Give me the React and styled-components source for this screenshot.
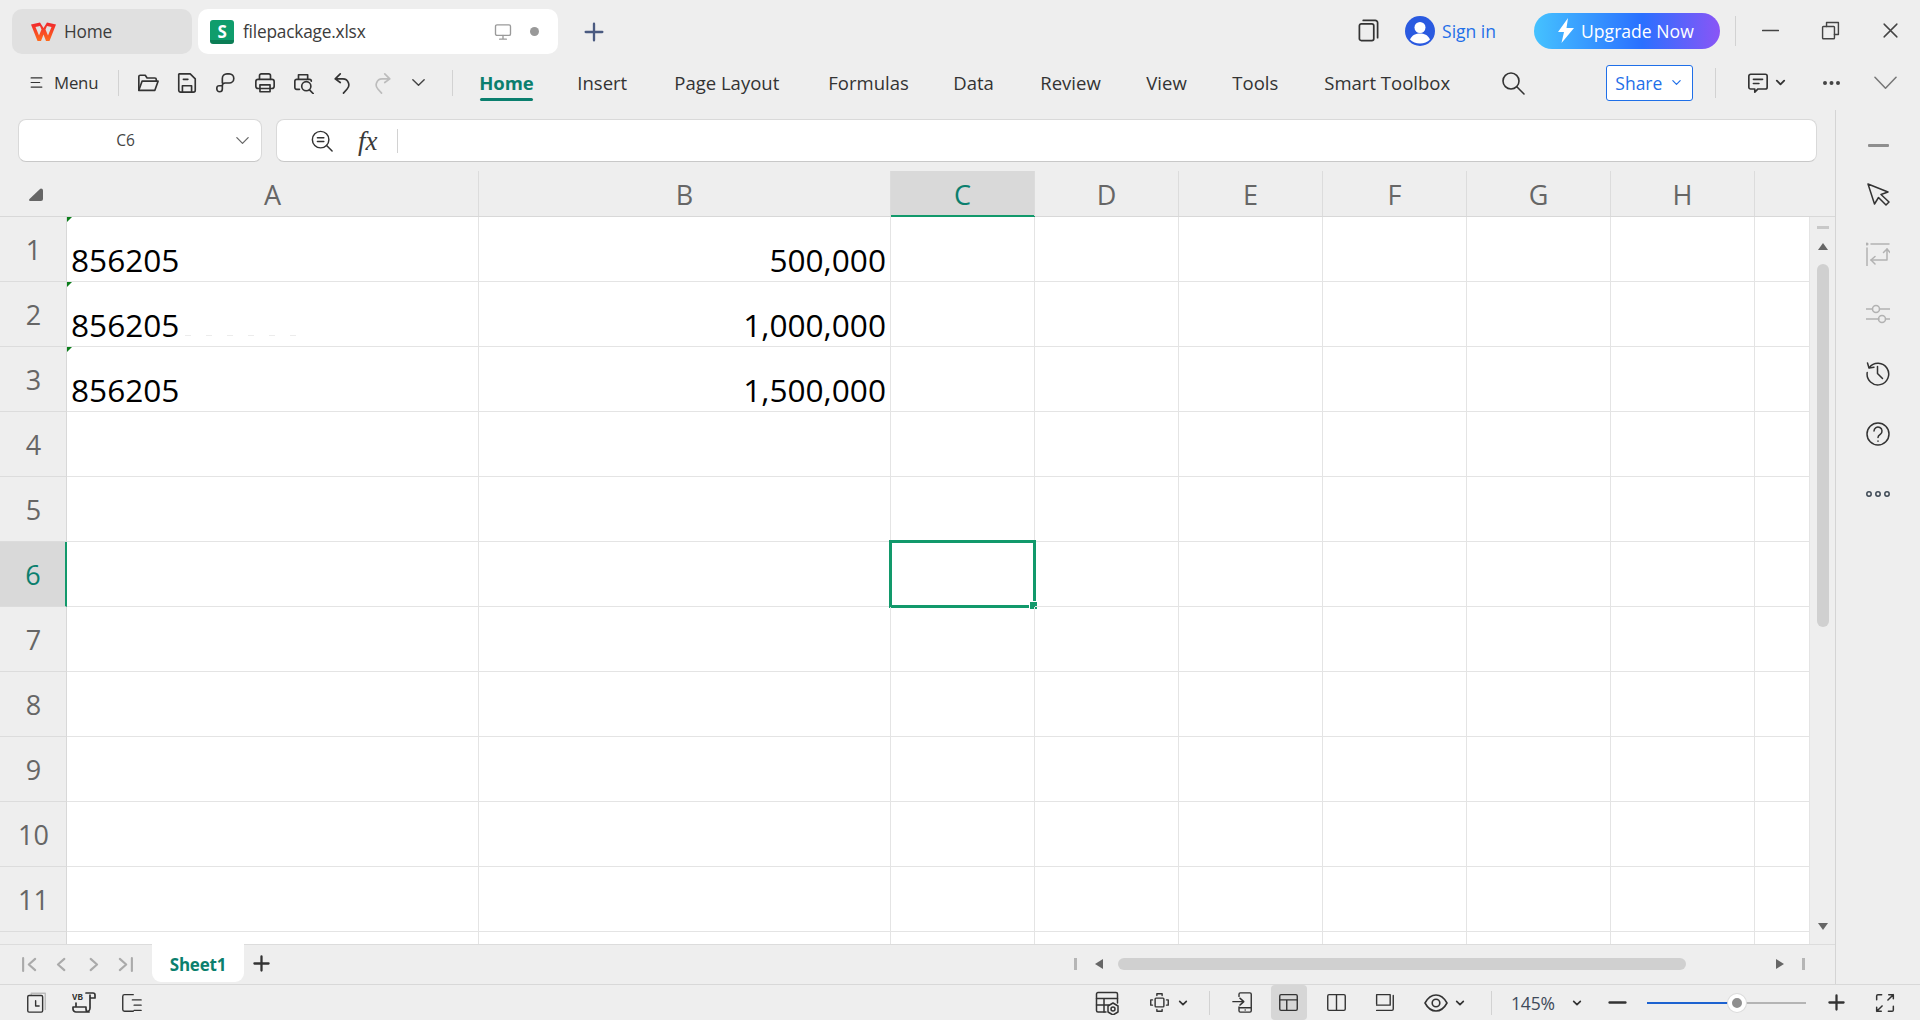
import React from "react";
import styled, { createGlobalStyle } from "styled-components";

const GlobalStyle = createGlobalStyle`
  html, body { margin: 0; padding: 0; height: 100%; background: #eeeeee; overflow: hidden; }
  * { box-sizing: border-box; }
  #root { height: 100%; }
`;

const TEAL = "#0b7f6e";
const GREEN = "#12996b";
const BLUE = "#1f6fe8";
const COLS = "67px 412px 412px 144px 144px 144px 144px 144px 144px 1fr";

const Page = styled.div`
  width: 1920px;
  height: 1020px;
  display: flex;
  flex-direction: column;
  background: #eeeeee;
  font-family: "Open Sans", "Noto Sans", sans-serif;
  color: #333;
`;

/* title bar */
const TitleBar = styled.div`
  height: 58px;
  flex: none;
  display: flex;
  align-items: flex-start;
  padding: 9px 0 0 12px;
`;
const Tab = styled.div`
  height: 45px;
  width: ${(p) => p.$w}px;
  margin-right: 6px;
  flex: none;
  display: flex;
  align-items: center;
  border-radius: 10px;
  padding-left: ${(p) => p.$pad}px;
  background: ${(p) => (p.$active ? "#ffffff" : "#e0e0e0")};
  font-size: 17.3px;
  letter-spacing: -0.2px;
  color: #3c3c3c;
`;
const TabName = styled.span`
  margin-left: ${(p) => p.$ml}px;
`;
const SheetBadge = styled.div`
  width: 24px;
  height: 24px;
  flex: none;
  border-radius: 3px;
  background: linear-gradient(#0f9d6c 0 82%, #0b7d55 82% 100%);
  color: #fff;
  font-weight: 700;
  font-size: 17px;
  display: flex;
  align-items: center;
  justify-content: center;
`;
const TabEnd = styled.div`
  margin-left: auto;
  display: flex;
  align-items: center;
  gap: 18px;
  padding-right: 19px;
`;
const TabDot = styled.span`
  width: 9px;
  height: 9px;
  border-radius: 50%;
  background: #999;
`;
const NewTab = styled.div`
  margin: 13px 0 0 20px;
  display: flex;
`;
const TitleRight = styled.div`
  margin-left: auto;
  display: flex;
  align-items: center;
  height: 39px;
  margin-top: 2px;
`;
const SignIn = styled.span`
  color: ${BLUE};
  font-size: 17.5px;
  margin-left: 7px;
`;
const Upgrade = styled.div`
  width: 186px;
  height: 36px;
  margin-left: 38px;
  border-radius: 18px;
  background: linear-gradient(90deg, #45c2ff 0%, #2a70ff 58%, #8a55f6 100%);
  color: #fff;
  font-size: 17.6px;
  display: flex;
  align-items: center;
  padding-left: 23px;
  gap: 6px;
`;
const VDivider = styled.div`
  width: 1px;
  height: ${(p) => p.$h || 26}px;
  margin: 0 ${(p) => p.$r ?? 0}px 0 ${(p) => p.$l ?? 0}px;
  background: #d2d2d2;
  flex: none;
`;
const WinButtons = styled.div`
  display: flex;
  align-items: center;
  width: 184px;
  padding-left: 26px;
  justify-content: flex-start;
  gap: 42px;
`;

/* ribbon */
const Ribbon = styled.div`
  height: 52px;
  flex: none;
  display: flex;
  align-items: center;
  padding: 0 0 3px 30px;
`;
const MenuText = styled.span`
  font-size: 16.8px;
  letter-spacing: -0.2px;
  margin-left: 11px;
`;
const QuickBar = styled.div`
  display: flex;
  align-items: center;
  gap: 17px;
`;
const RibbonTabs = styled.div`
  display: flex;
  align-items: center;
  margin-left: 26px;
`;
const RibbonTab = styled.div`
  position: relative;
  font-size: 18.5px;
  width: ${(p) => p.$w}px;
  font-weight: ${(p) => (p.$active ? 700 : 400)};
  letter-spacing: ${(p) => (p.$active ? "-0.1px" : "0")};
  color: ${(p) => (p.$active ? TEAL : "#333")};
  white-space: nowrap;
  &::after {
    content: "";
    display: ${(p) => (p.$active ? "block" : "none")};
    position: absolute;
    left: 1px;
    top: 28px;
    width: 53px;
    height: 3px;
    border-radius: 2px;
    background: ${TEAL};
  }
`;
const ShareButton = styled.div`
  width: 87px;
  height: 36px;
  margin-left: 81px;
  border: 1px solid ${BLUE};
  border-radius: 3px;
  background: #fff;
  color: ${BLUE};
  font-size: 17.5px;
  display: flex;
  align-items: center;
  padding-left: 8px;
  gap: 9px;
`;
const RibbonEnd = styled.div`
  display: flex;
  align-items: center;
`;
const MoreDots = styled.div`
  display: flex;
  margin-left: ${(p) => p.$ml}px;
`;

/* main */
const Main = styled.div`
  flex: 1;
  display: flex;
  min-height: 0;
`;
const Workspace = styled.div`
  width: 1835px;
  flex: none;
  display: flex;
  flex-direction: column;
`;
const Rail = styled.div`
  flex: 1;
  border-left: 1px solid #d4d4d4;
  display: flex;
  flex-direction: column;
  align-items: center;
  padding-top: 34px;
  gap: 36px;
`;
const RailDash = styled.div`
  width: 21px;
  height: 3px;
  margin-bottom: -1px;
  border-radius: 1px;
  background: #8e8e8e;
`;

const FormulaRow = styled.div`
  height: 61px;
  flex: none;
  padding: 9px 18px 9px 18px;
  display: flex;
  gap: 14px;
`;
const Box = styled.div`
  height: 43px;
  background: #fff;
  border: 1px solid #d9d9d9;
  border-bottom-color: #c8c8c8;
  border-radius: 8px;
  display: flex;
  align-items: center;
`;
const NameBox = styled(Box)`
  width: 244px;
  flex: none;
  font-size: 15.5px;
  color: #444;
  padding-right: 10px;
  & > span {
    flex: 1;
    text-align: center;
    padding: 0 2px 2px 0;
  }
`;
const FormulaBox = styled(Box)`
  flex: 1;
  padding-left: 34px;
`;
const Fx = styled.span`
  font-family: "Liberation Serif", serif;
  font-style: italic;
  font-size: 27px;
  line-height: 30px;
  color: #3a3a3a;
  margin: 0 17px 0 25px;
  width: 22px;
`;

/* sheet */
const ColumnHeader = styled.div`
  height: 46px;
  flex: none;
  display: grid;
  grid-template-columns: ${COLS};
  border-bottom: 1px solid #d8d8d8;
`;
const Corner = styled.div`
  display: flex;
  align-items: center;
  justify-content: center;
  padding: 0 0 0 4px;
  margin-top: 2px;
`;
const ColLabel = styled.div`
  position: relative;
  display: flex;
  align-items: center;
  justify-content: center;
  padding-top: 2px;
  font-size: 27px;
  color: ${(p) => (p.$on ? TEAL : "#666")};
  background: ${(p) => (p.$on ? "#d9d9d9" : "transparent")};
  border-right: ${(p) => (p.$last ? "none" : "1px solid #dcdcdc")};
  box-shadow: ${(p) => (p.$on ? `inset 0 -1px 0 ${GREEN}, 0 1px 0 ${GREEN}` : "none")};
`;
const SheetBody = styled.div`
  flex: 1;
  display: flex;
  min-height: 0;
`;
const Grid = styled.div`
  width: 1810px;
  flex: none;
  overflow: hidden;
  background: #fff;
`;
const Row = styled.div`
  height: ${(p) => p.$h}px;
  display: grid;
  grid-template-columns: ${COLS};
`;
const RowLabel = styled.div`
  display: flex;
  align-items: center;
  justify-content: center;
  padding-left: 1px;
  font-size: 27px;
  background: ${(p) => (p.$on ? "#d9d9d9" : "#eeeeee")};
  color: ${(p) => (p.$on ? TEAL : "#666")};
  border-bottom: 1px solid #dcdcdc;
  border-right: ${(p) => (p.$on ? `2px solid ${GREEN}` : "1px solid #d8d8d8")};
`;
const Cell = styled.div`
  position: relative;
  display: flex;
  align-items: flex-end;
  justify-content: ${(p) => (p.$right ? "flex-end" : "flex-start")};
  padding: 0 4px 1px 4px;
  font-size: 31.6px;
  line-height: 41px;
  color: #000;
  border-right: 1px solid #e4e4e4;
  border-bottom: 1px solid #e4e4e4;
`;
const ErrorMark = styled.span`
  position: absolute;
  left: 0;
  top: 0;
  width: 0;
  height: 0;
  border-top: 5px solid #0a7d1a;
  border-right: 5px solid transparent;
`;
const Selection = styled.div`
  position: absolute;
  inset: -2px;
  border: 3px solid ${GREEN};
  &::after {
    content: "";
    position: absolute;
    right: -4px;
    bottom: -4px;
    width: 7px;
    height: 7px;
    background: ${GREEN};
    border: 1px solid #fff;
    border-right: none;
    border-bottom: none;
  }
`;
const FaintMark = styled.span`
  position: absolute;
  left: 118px;
  bottom: 10px;
  width: 116px;
  height: 1px;
  background: repeating-linear-gradient(90deg, #ececec 0 6px, transparent 6px 21px);
`;
const VScroll = styled.div`
  flex: 1;
  display: flex;
  flex-direction: column;
  align-items: center;
  padding: 9px 0 15px;
`;
const ScrollDash = styled.div`
  width: 12px;
  height: 3px;
  background: #c8c8c8;
`;
const Arrow = styled.div`
  width: 0;
  height: 0;
  border-left: 5px solid transparent;
  border-right: 5px solid transparent;
  ${(p) => (p.$down ? "border-top" : "border-bottom")}: 7px solid #666;
  margin-top: ${(p) => p.$mt};
`;
const VThumb = styled.div`
  width: 12px;
  height: 363px;
  margin-top: 14px;
  border-radius: 6px;
  background: #d0d0d0;
`;

const SheetBar = styled.div`
  height: 40px;
  flex: none;
  display: flex;
  align-items: flex-start;
  border-top: 1px solid #dcdcdc;
  margin-top: -1px;
  padding-left: 21px;
  position: relative;
`;
const NavGroup = styled.div`
  display: flex;
  align-items: center;
  height: 38px;
  gap: 15px;
  width: 131px;
  flex: none;
`;
const SheetTab = styled.div`
  width: 92px;
  height: 38px;
  margin-top: -1px;
  padding-top: 2px;
  background: #fff;
  border-radius: 0 0 9px 9px;
  color: ${TEAL};
  font-size: 17px;
  font-weight: 700;
  letter-spacing: -0.2px;
  display: flex;
  align-items: center;
  justify-content: center;
  flex: none;
`;
const AddSheet = styled.div`
  margin: 10px 0 0 9px;
  display: flex;
`;
const HScroll = styled.div`
  margin-left: auto;
  display: flex;
  align-items: center;
  height: 38px;
  padding-right: 30px;
`;
const Tick = styled.div`
  width: 3px;
  height: 12px;
  background: #b5b5b5;
`;
const SideArrow = styled.div`
  width: 0;
  height: 0;
  border-top: 5px solid transparent;
  border-bottom: 5px solid transparent;
  ${(p) => (p.$right ? "border-left" : "border-right")}: 8px solid #666;
  margin: 0 ${(p) => p.$r}px 0 ${(p) => p.$l}px;
`;
const HThumb = styled.div`
  width: 568px;
  height: 12px;
  border-radius: 6px;
  background: #d0d0d0;
`;

/* status bar */
const StatusBar = styled.div`
  height: 36px;
  flex: none;
  border-top: 1px solid #d8d8d8;
  display: flex;
  align-items: center;
  padding-left: 26px;
`;
const StatusLeft = styled.div`
  display: flex;
  align-items: center;
  gap: 25px;
`;
const StatusRight = styled.div`
  margin-left: auto;
  display: flex;
  align-items: center;
  padding-right: 25px;
`;
const ViewButton = styled.div`
  width: 36px;
  height: 35px;
  display: flex;
  align-items: center;
  justify-content: center;
  border-radius: 4px;
  margin-left: ${(p) => p.$ml || 0}px;
  background: ${(p) => (p.$on ? "#d6d6d6" : "transparent")};
`;
const ZoomValue = styled.span`
  font-size: 17.5px;
  letter-spacing: -0.1px;
  color: #3f4a5a;
  margin: 0 17px 0 19px;
`;
const Slider = styled.div`
  position: relative;
  width: 159px;
  height: 2px;
  margin: 0 22px 0 20px;
  background: #b4b4b4;
`;
const SliderFill = styled.div`
  height: 100%;
  background: #1c62d0;
`;
const Knob = styled.div`
  position: absolute;
  top: -8px;
  width: 18px;
  height: 18px;
  transform: translateX(-9px);
  border-radius: 50%;
  background: #8f8f8f;
  border: 4px solid #fff;
  box-shadow: 0 0 0 1px #dcdcdc;
`;

const Svg = styled.svg`
  width: ${(p) => p.$w}px;
  height: ${(p) => p.$h}px;
  margin-left: ${(p) => p.$ml || 0}px;
  flex: none;
  fill: none;
  color: ${(p) => p.$c};
  stroke: currentColor;
  stroke-width: ${(p) => p.$sw};
  stroke-linecap: round;
  stroke-linejoin: round;
`;
const Ic = ({ w = 24, h, c = "#333", sw = 1.8, ml, vb = "0 0 24 24", children }) => (
  <Svg $w={w} $h={h || w} $c={c} $sw={sw} $ml={ml} viewBox={vb}>
    {children}
  </Svg>
);

const Solid = (p) => <path fill="currentColor" stroke="none" {...p} />;
const Chevron = ({ w = 14, c = "#444", sw = 2.4, ml }) => (
  <Ic w={w} c={c} sw={sw} ml={ml}>
    <path d="M4 8l8 8 8-8" />
  </Ic>
);

const WpsLogo = () => (
  <Svg $w={25} $h={19} $c="#f03a2e" $sw={0} viewBox="0 0 25 19">
    <defs>
      <linearGradient id="wps" x1="0" y1="0" x2="0" y2="1">
        <stop offset="0" stopColor="#f0262e" />
        <stop offset="1" stopColor="#ff6a1c" />
      </linearGradient>
    </defs>
    <path
      fill="url(#wps)"
      stroke="none"
      d="M0 2.500 9 .5 12.500 6 16 .5 25 2.500 18.500 19h-3.500l-2.500-6.500L10 19H6.500zM4.500 5l3.500 8.500 2.500-6-1.500-3.500zM20.500 5 16 4l-1.500 3.500 2.500 6z"
    />
  </Svg>
);

const icons = {
  menu: <path d="M2 3.500h20M2 12h16M2 20.500h20" />,
  folder: (
    <>
      <path d="M2 20V5a1.500 1.500 0 0 1 1.500-1.500H9l2 3h8.500A1.500 1.500 0 0 1 21 8v2" />
      <path d="M2 20l3.500-10H23l-3.500 10z" />
    </>
  ),
  save: (
    <>
      <path d="M3.500 2h12l5.500 5.500V20a2 2 0 0 1-2 2H5a2 2 0 0 1-2-2V2.500z" />
      <path d="M8 8h5M7 22v-7h10v7" />
    </>
  ),
  painter: (
    <path d="M8 12V7a5 5 0 0 1 5-5h2.500a5 5 0 0 1 0 10H11a3 3 0 0 0-3 3v3.500a3 3 0 0 1-6 0v-1a2.500 2.500 0 0 1 2.500-2.500H7" />
  ),
  print: (
    <>
      <path d="M6 8V4a2 2 0 0 1 2-2h8a2 2 0 0 1 2 2v4" />
      <rect x="2" y="8" width="20" height="10" rx="2.500" />
      <path d="M6.500 14h11v7.500h-11z" />
    </>
  ),
  preview: (
    <>
      <path d="M6 8V3h10v5M7 19H4a2 2 0 0 1-2-2v-7a2 2 0 0 1 2-2h14a2 2 0 0 1 2 2" />
      <circle cx="14.500" cy="15.500" r="5" />
      <path d="M18 19.500l4 4" />
    </>
  ),
  undo: <path d="M9 2 3.500 7.500 9 11.500M3.500 7.500H12a6.500 6.500 0 0 1 4.500 11L12.500 23" />,
  redo: <path d="M15 2l5.500 5.500L15 11.500M20.500 7.500H12a6.500 6.500 0 0 0-4.500 11l4 4.500" />,
  search: (
    <>
      <circle cx="10" cy="10" r="8" />
      <path d="M15.800 15.800 23 23" />
    </>
  ),
  comment: (
    <>
      <path d="M4 2.500h16a2 2 0 0 1 2 2v12a2 2 0 0 1-2 2h-8l-3.500 3.500V18.500H4a2 2 0 0 1-2-2v-12a2 2 0 0 1 2-2z" />
      <path d="M7 8h10M7 12.500h6" />
    </>
  ),
  monitor: (
    <>
      <rect x="2" y="2.500" width="20" height="14" rx="2" />
      <path d="M12 16.500V21M7.500 21.500h9" />
    </>
  ),
  stack: (
    <>
      <rect x="2.500" y="5" width="15" height="17.500" rx="2" />
      <path d="M6.500 1.500H19a2.500 2.500 0 0 1 2.500 2.500v15.500" />
    </>
  ),
  restore: (
    <>
      <rect x="2" y="7" width="15" height="15.500" rx="1" />
      <path d="M7 7V2h15v15h-5" />
    </>
  ),
  close: <path d="M3 3l18 18M21 3 3 21" />,
  zoomOut: (
    <>
      <circle cx="10.500" cy="10.500" r="9" />
      <path d="M7 8.500h7M7 12.500h7M17 17l6 6" />
    </>
  ),
  cursor: <path d="M2 2l20 8-7 2.500 8 7.500-3 3-7.500-7.500L8.500 22z" />,
  wrap: (
    <>
      <path d="M5 2h18M1 6v18M21 7v11H5" />
      <path d="M17.500 10.500 21 7l3 3.500M9 14.500 5 18l4 4" />
      <circle cx="1" cy="2" r=".8" />
    </>
  ),
  sliders: (
    <>
      <path d="M0 7h6.500M13.500 7H24M0 17h13M19.500 17H24" />
      <circle cx="10" cy="7" r="3.500" />
      <circle cx="16" cy="17" r="3.500" />
    </>
  ),
  history: (
    <>
      <path d="M3.300 5.500A10.800 10.800 0 1 1 1.200 10.500" />
      <path d="M1.500 1 3 6l5-.8M11.500 4.500v7l5 5" />
    </>
  ),
  help: (
    <>
      <circle cx="12" cy="12" r="11" />
      <path d="M8 9a4 4 0 1 1 6.300 3.300c-1.400 1-2.300 1.600-2.300 3.200M12 19v.3" />
    </>
  ),
  ooo: (
    <>
      <circle cx="3" cy="12" r="2.200" />
      <circle cx="12" cy="12" r="2.200" />
      <circle cx="21" cy="12" r="2.200" />
    </>
  ),
  first: <path d="M3 3v18M20 4l-9 8 9 8" />,
  prev: <path d="M16 4l-9 8 9 8" />,
  next: <path d="M8 4l9 8-9 8" />,
  last: <path d="M21 3v18M4 4l9 8-9 8" />,
  plus: <path d="M12 2v20M2 12h20" />,
  clock: (
    <>
      <path d="M6 3V1.500h16V20" stroke="#bbb" />
      <rect x="2" y="4" width="17" height="19" rx="1.500" />
      <path d="M11 10v6h4" />
    </>
  ),
  outline: <path d="M14 3H4a2 2 0 0 0-2 2v15a2 2 0 0 0 2 2h10M13 9h10M15 15h8M15 21h8" />,
  table: (
    <>
      <path d="M11 21H3a1.500 1.500 0 0 1-1.500-1.500V3A1.500 1.500 0 0 1 3 1.500h18A1.500 1.500 0 0 1 22.500 3v9" />
      <path d="M1.500 7.500h21M1.500 14h12M9 7.500V21" />
      <path d="M18 12l5 3v6l-5 3-5-3v-6z" />
      <circle cx="18" cy="18" r="2" />
    </>
  ),
  move: (
    <>
      <rect x="7" y="7" width="10" height="10" rx="1" />
      <path d="M9 4V2h6v2M9 20v2h6v-2M4 9H2v6h2M20 9h2v6h-2" />
    </>
  ),
  reading: (
    <>
      <path d="M8 5V2.500A1.500 1.500 0 0 1 9.500 1h11A1.500 1.500 0 0 1 22 2.500v19a1.500 1.500 0 0 1-1.500 1.500h-11A1.500 1.500 0 0 1 8 21.500V17M8 18h14" />
      <path d="M1 11h12M9 7l4.500 4L9 15M15 20.500h.1" />
    </>
  ),
  normal: (
    <>
      <rect x="2" y="3" width="20" height="18" rx="1.500" />
      <path d="M2 9h20M10 9v12" />
    </>
  ),
  split: (
    <>
      <rect x="2" y="3" width="20" height="18" rx="1.500" />
      <path d="M12 3v18" />
    </>
  ),
  page: (
    <>
      <path d="M3 14V3h15.500v12H3" />
      <path d="M22 4v15.500a1.500 1.500 0 0 1-1.500 1.500H3" />
    </>
  ),
  eye: (
    <>
      <path d="M1 12C4 6.500 8 4 12 4s8 2.500 11 8c-3 5.500-7 8-11 8s-8-2.500-11-8z" />
      <circle cx="12" cy="12" r="3.800" />
    </>
  ),
  full: (
    <path d="M8 2H3.500A1.500 1.500 0 0 0 2 3.500V8M16 22h4.500a1.500 1.500 0 0 0 1.500-1.500V16M22 7V2h-5.500M22 2l-6.500 6.500M2 17v5h5.500M2 22l6.500-6.500" />
  ),
};

const DotsH = ({ w = 19 }) => (
  <Ic w={w} h={6} vb="0 0 19 6" c="#444">
    <Solid d="M3 1a2 2 0 1 0 0 4 2 2 0 0 0 0-4zM9.500 1a2 2 0 1 0 0 4 2 2 0 0 0 0-4zM16 1a2 2 0 1 0 0 4 2 2 0 0 0 0-4z" />
  </Ic>
);

const VbIcon = () => (
  <Svg $w={24} $h={22} $c="#333" $sw={1.7} viewBox="0 0 24 22">
    <text x="0" y="7.500" fontFamily="Liberation Mono, monospace" fontWeight="700" fontSize="9" stroke="none" fill="currentColor">
      VB
    </text>
    <path d="M14 1h7a2 2 0 0 1 2 2v3h-4M18 3v13a4 4 0 0 1-4 4H4a3 3 0 0 1-3-3v-2h13v2a3 3 0 0 0 3 3M4 14v-3" />
  </Svg>
);

const quickIcons = ["folder", "save", "painter", "print", "preview", "undo", "redo"];
const tabs = [
  ["Insert", 97],
  ["Page Layout", 154],
  ["Formulas", 125],
  ["Data", 87],
  ["Review", 106],
  ["View", 86],
  ["Tools", 92],
  ["Smart Toolbox", 177],
];
const columns = ["A", "B", "C", "D", "E", "F", "G", "H", ""];
const values = { 1: "500,000", 2: "1,000,000", 3: "1,500,000" };
const rows = [1, 2, 3, 4, 5, 6, 7, 8, 9, 10, 11, ""];
const railIcons = [
  ["cursor", "#333"],
  ["wrap", "#b2b2b2"],
  ["sliders", "#b2b2b2"],
  ["history", "#333"],
  ["help", "#333"],
  ["ooo", "#3f4a55"],
];

export default function App() {
  return (
    <Page>
      <GlobalStyle />
      <TitleBar>
        <Tab $w={180} $pad={19}>
          <WpsLogo />
          <TabName $ml={8}>Home</TabName>
        </Tab>
        <Tab $w={360} $pad={12} $active>
          <SheetBadge>S</SheetBadge>
          <TabName $ml={9}>filepackage.xlsx</TabName>
          <TabEnd>
            <Ic w={18} c="#9a9a9a" sw={1.8}>
              {icons.monitor}
            </Ic>
            <TabDot />
          </TabEnd>
        </Tab>
        <NewTab>
          <Ic w={20} c="#4a5a80" sw={2.8}>
            {icons.plus}
          </Ic>
        </NewTab>
        <TitleRight>
          <Ic w={23}>{icons.stack}</Ic>
          <Svg $w={30} $h={30} $c="#2a5ae0" $sw={0} $ml={25} viewBox="0 0 30 30">
            <circle cx="15" cy="15" r="15" fill="#2a5ae0" />
            <circle cx="15" cy="11.500" r="5.500" fill="#fff" />
            <path d="M5 23.500c2-4.500 6-6 10-6s8 1.500 10 6c-2.500 2.500-6 4-10 4s-7.500-1.500-10-4z" fill="#fff" />
          </Svg>
          <SignIn>Sign in</SignIn>
          <Upgrade>
            <Ic w={18} h={25} c="#fff" sw={0} vb="0 0 18 25">
              <Solid d="M11 0 1 14h6l-2.500 11L17 10h-7.500z" />
            </Ic>
            Upgrade Now
          </Upgrade>
          <VDivider $h={30} $l={15} />
          <WinButtons>
            <Ic w={17} c="#444" sw={2.2}>
              <path d="M1 12h22" />
            </Ic>
            <Ic w={19} c="#444" sw={1.8}>
              {icons.restore}
            </Ic>
            <Ic w={17} c="#444" sw={2}>
              {icons.close}
            </Ic>
          </WinButtons>
        </TitleRight>
      </TitleBar>

      <Ribbon>
        <Ic w={13} h={19} sw={2}>
          {icons.menu}
        </Ic>
        <MenuText>Menu</MenuText>
        <VDivider $l={20} $r={18} />
        <QuickBar>
          {quickIcons.map((name) => (
            <Ic key={name} w={22} c={name === "redo" ? "#bcbcbc" : "#333"}>
              {icons[name]}
            </Ic>
          ))}
          <Chevron w={17} sw={2} />
        </QuickBar>
        <VDivider $l={25} />
        <RibbonTabs>
          <RibbonTab $active $w={98}>
            Home
          </RibbonTab>
          {tabs.map(([name, w]) => (
            <RibbonTab key={name} $w={w}>
              {name}
            </RibbonTab>
          ))}
        </RibbonTabs>
        <RibbonEnd>
          <Ic w={24} sw={1.6}>
            {icons.search}
          </Ic>
          <ShareButton>
            Share
            <Chevron w={11} c={BLUE} sw={2.6} />
          </ShareButton>
          <VDivider $h={30} $l={22} $r={31} />
          <Ic w={22}>{icons.comment}</Ic>
          <Chevron w={11} c="#333" sw={4} ml={6} />
          <MoreDots $ml={36}>
            <DotsH />
          </MoreDots>
          <Ic w={23} c="#777" sw={1.6} ml={33}>
            <path d="M1 6.500 12 18 23 6.500" />
          </Ic>
        </RibbonEnd>
      </Ribbon>

      <Main>
        <Workspace>
          <FormulaRow>
            <NameBox>
              <span>C6</span>
              <Chevron w={17} c="#666" sw={1.8} />
            </NameBox>
            <FormulaBox>
              <Ic w={22} sw={1.6}>
                {icons.zoomOut}
              </Ic>
              <Fx>fx</Fx>
              <VDivider $h={24} />
            </FormulaBox>
          </FormulaRow>

          <ColumnHeader>
            <Corner>
              <Ic w={14} h={13} vb="0 0 14 13" c="#666" sw={0}>
                <Solid d="M12 .5a2 2 0 0 1 2 2V11a2 2 0 0 1-2 2H1.500C.2 13-.4 12 .5 11L11 1c.3-.3.6-.5 1-.5z" />
              </Ic>
            </Corner>
            {columns.map((name, i) => (
              <ColLabel key={i} $on={name === "C"} $last={!name}>
                {name}
              </ColLabel>
            ))}
          </ColumnHeader>

          <SheetBody>
            <Grid>
              {rows.map((row) => (
                <Row key={row} $h={row ? 65 : 13}>
                  <RowLabel $on={row === 6}>{row}</RowLabel>
                  {columns.map((name, i) => (
                    <Cell key={i} $right={name === "B"}>
                      {name === "A" && values[row] && <ErrorMark />}
                      {name === "A" && values[row] && "856205"}
                      {name === "A" && row === 2 && <FaintMark />}
                      {name === "B" && values[row]}
                      {name === "C" && row === 6 && <Selection />}
                    </Cell>
                  ))}
                </Row>
              ))}
            </Grid>
            <VScroll>
              <ScrollDash />
              <Arrow $mt="14px" />
              <VThumb />
              <Arrow $down $mt="auto" />
            </VScroll>
          </SheetBody>

          <SheetBar>
            <NavGroup>
              {["first", "prev", "next", "last"].map((name) => (
                <Ic key={name} w={17} c="#aaaaaa" sw={3}>
                  {icons[name]}
                </Ic>
              ))}
            </NavGroup>
            <SheetTab>Sheet1</SheetTab>
            <AddSheet>
              <Ic w={17} c="#333" sw={3.2}>
                {icons.plus}
              </Ic>
            </AddSheet>
            <HScroll>
              <Tick />
              <SideArrow $l={18} $r={15} />
              <HThumb />
              <SideArrow $right $l={90} $r={18} />
              <Tick />
            </HScroll>
          </SheetBar>
        </Workspace>
        <Rail>
          <RailDash />
          {railIcons.map(([name, c]) => (
            <Ic key={name} w={24} c={c} sw={1.5}>
              {icons[name]}
            </Ic>
          ))}
        </Rail>
      </Main>

      <StatusBar>
        <StatusLeft>
          <Ic w={21} sw={1.6}>
            {icons.clock}
          </Ic>
          <VbIcon />
          <Ic w={21} sw={1.6}>
            {icons.outline}
          </Ic>
        </StatusLeft>
        <StatusRight>
          <Ic w={24} sw={1.5}>
            {icons.table}
          </Ic>
          <Ic w={21} sw={1.6} ml={30}>
            {icons.move}
          </Ic>
          <Chevron w={10} c="#333" sw={4} ml={8} />
          <VDivider $h={24} $l={21} $r={22} />
          <Ic w={21} sw={1.6}>
            {icons.reading}
          </Ic>
          <ViewButton $on $ml={18}>
            <Ic w={21} sw={1.6}>
              {icons.normal}
            </Ic>
          </ViewButton>
          <ViewButton $ml={12}>
            <Ic w={21} sw={1.6}>
              {icons.split}
            </Ic>
          </ViewButton>
          <ViewButton $ml={12}>
            <Ic w={21} sw={1.6}>
              {icons.page}
            </Ic>
          </ViewButton>
          <Ic w={24} sw={1.6} ml={21}>
            {icons.eye}
          </Ic>
          <Chevron w={10} c="#333" sw={4} ml={7} />
          <VDivider $h={24} $l={26} />
          <ZoomValue>145%</ZoomValue>
          <Chevron w={10} c="#333" sw={4} />
          <Ic w={19} c="#333" sw={3} ml={26}>
            <path d="M2 12h20" />
          </Ic>
          <Slider>
            <SliderFill style={{ width: `${(90 / 159) * 100}%` }} />
            <Knob style={{ left: 90 }} />
          </Slider>
          <Ic w={17} c="#333" sw={3.2}>
            {icons.plus}
          </Ic>
          <Ic w={20} sw={1.8} ml={30}>
            {icons.full}
          </Ic>
        </StatusRight>
      </StatusBar>
    </Page>
  );
}
